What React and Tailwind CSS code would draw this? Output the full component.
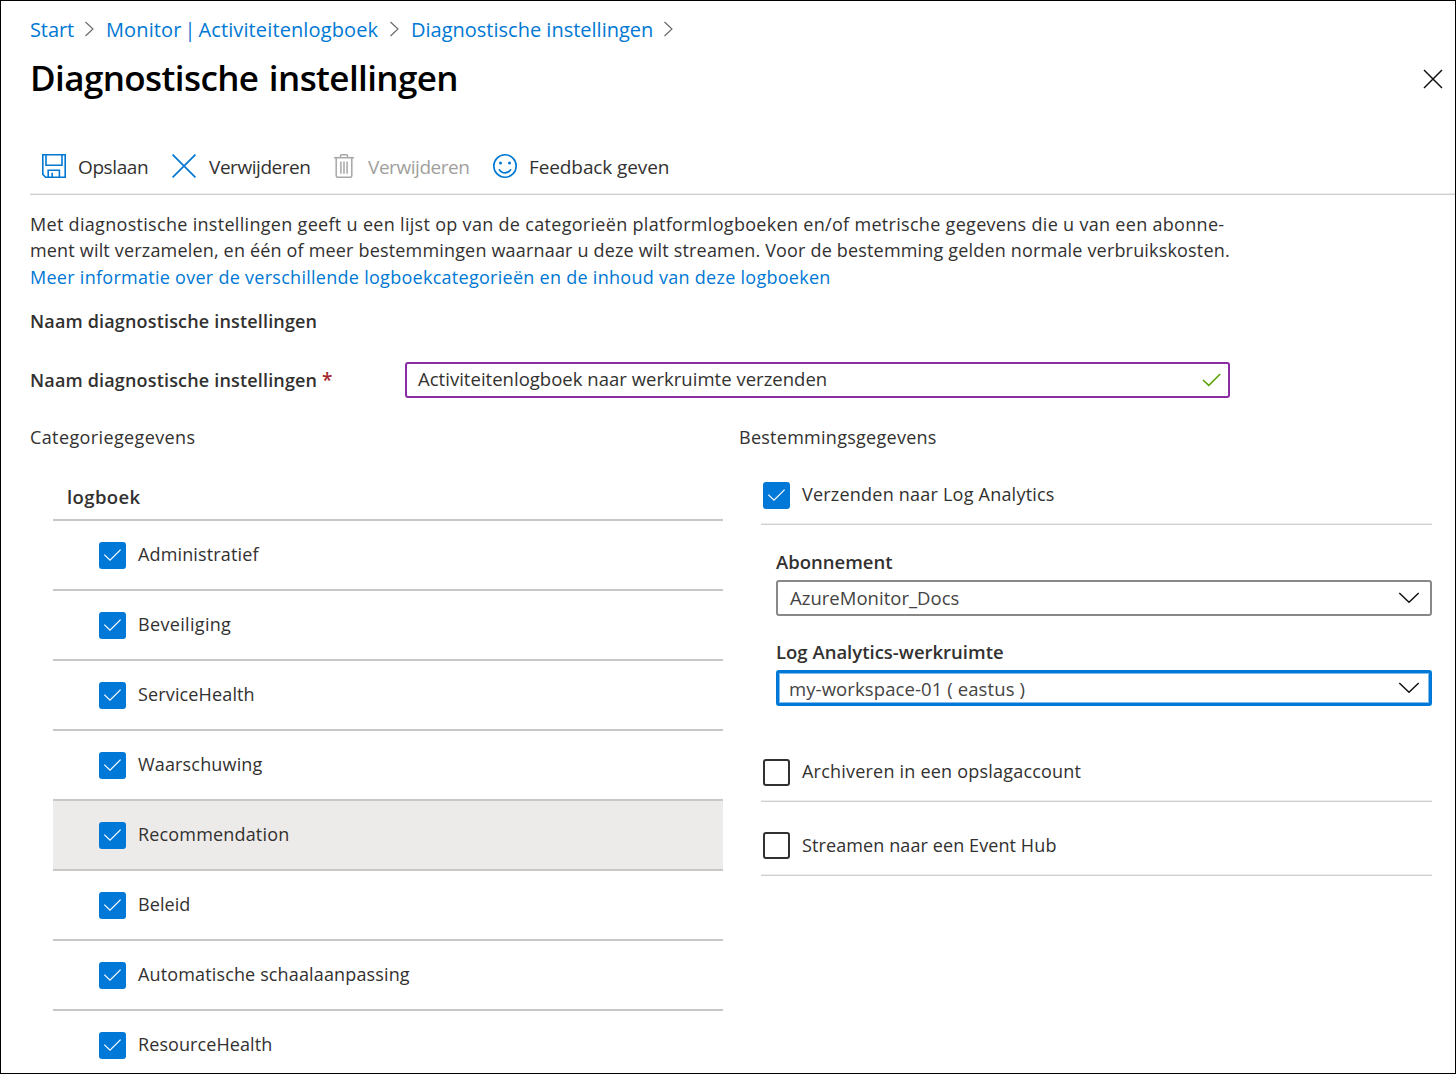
import React from "react";

const lineIcon = { fill: "none", xmlns: "http://www.w3.org/2000/svg" };

function CheckBox({ checked }) {
  if (!checked) return <span className="size-[27px] shrink-0 rounded-[3px] border-2 border-[#323130]" />;
  return (
    <span className="flex size-[27px] shrink-0 items-center justify-center rounded-[3px] bg-[#0078d7]">
      <svg {...lineIcon} width="27" height="27" viewBox="0 0 27 27" stroke="#fff" strokeWidth="1.2">
        <path d="M5.3 12.6 L11 18.2 L21.6 7.6" />
      </svg>
    </span>
  );
}

function CrumbArrow() {
  return (
    <svg {...lineIcon} width="10" height="16" viewBox="0 0 10 16" stroke="#666" strokeWidth="1.1" className="-mt-[3px] shrink-0">
      <path d="M0.5 1 L8 8 L0.5 15" />
    </svg>
  );
}

function SaveIcon() {
  return (
    <svg {...lineIcon} width="24" height="24" viewBox="0 0 24 24" stroke="#0078d4" strokeWidth="1.6">
      <path d="M0.8 0.8 H23.2 V23.2 H3.6 L0.8 20.4 Z" />
      <path d="M4 0.8 V11.2 H20 V0.8" />
      <path d="M6.2 23.2 V16.2 H17.4 V23.2" />
      <path d="M10.2 18.8 V23.2" />
    </svg>
  );
}

function DiscardIcon() {
  return (
    <svg {...lineIcon} width="24" height="24" viewBox="0 0 24 24" stroke="#0078d4" strokeWidth="1.7">
      <path d="M0.6 0.6 L23.4 23.4 M23.4 0.6 L0.6 23.4" />
    </svg>
  );
}

function TrashIcon() {
  return (
    <svg {...lineIcon} width="20" height="24" viewBox="0 0 20 24" stroke="#a9a7a5" strokeWidth="1.5">
      <path d="M0 3.7 H20" />
      <path d="M6.5 3.5 V1.8 Q6.5 0.8 7.5 0.8 H12.5 Q13.5 0.8 13.5 1.8 V3.5" />
      <path d="M2.2 3.7 V21.7 Q2.2 23.2 3.7 23.2 H16.3 Q17.8 23.2 17.8 21.7 V3.7" />
      <path d="M6.9 7.5 V19.8 M10 7.5 V19.8 M13.1 7.5 V19.8" />
    </svg>
  );
}

function SmileIcon() {
  return (
    <svg {...lineIcon} width="24" height="24" viewBox="0 0 24 24" stroke="#0078d4" strokeWidth="1.6">
      <circle cx="12" cy="12" r="11.2" />
      <path d="M6 15.2 Q8.4 18.9 12 18.9 Q15.6 18.9 18 15.2" />
      <circle cx="7.5" cy="9" r="1.5" fill="#0078d4" stroke="none" />
      <circle cx="16.5" cy="9" r="1.5" fill="#0078d4" stroke="none" />
    </svg>
  );
}

function Select({ value, className, focused }) {
  return (
    <div
      className={
        focused
          ? "flex h-9 items-center justify-between rounded-[3px] border-[3px] border-[#0078d7] pr-[9px] pl-[10px] inset-ring inset-ring-[#7fbbeb]"
          : "flex h-9 items-center justify-between rounded-[3px] border-2 border-[#8a8886] pr-[10px] pl-[12px]"
      }
    >
      <span className={"text-[18.5px] whitespace-pre text-[#454443] " + className}>{value}</span>
      <svg {...lineIcon} width="22" height="12" viewBox="0 0 22 12" stroke="#111" strokeWidth="1.5" className="mt-px">
        <path d="M1.3 1 L11 10.3 L20.7 1" />
      </svg>
    </div>
  );
}

function Destination({ label, checked, className, labelClass }) {
  return (
    <div className={"flex items-start border-b border-[#cfcfcf] pl-[2px] shadow-[inset_0_-1px_0_#ededed] " + className}>
      <CheckBox checked={checked} />
      <span className={"ml-3 leading-[27px] whitespace-pre " + labelClass}>{label}</span>
    </div>
  );
}

const categories = [
  { name: "Administratief", tracking: "tracking-[0.14px]" },
  { name: "Beveiliging", tracking: "tracking-[0.33px]" },
  { name: "ServiceHealth", tracking: "tracking-[0.14px]" },
  { name: "Waarschuwing", tracking: "tracking-[0.16px]" },
  { name: "Recommendation", tracking: "tracking-[0.17px]", hovered: true },
  { name: "Beleid", tracking: "tracking-[0.08px]" },
  { name: "Automatische schaalaanpassing", tracking: "tracking-[0.14px]" },
  { name: "ResourceHealth", tracking: "tracking-[0.09px]" },
];

export default function App() {
  return (
    <div className="flex h-[1074px] w-[1456px] flex-col overflow-hidden border border-black bg-white pl-[29px] font-['Open_Sans','Noto_Sans',sans-serif] text-[18px] text-[#323130]">
      <nav className="mt-[9px] flex h-10 shrink-0 items-center text-[20px] whitespace-pre text-[#0078d4]">
        <span className="w-[55px] tracking-[-0.1px]">Start</span>
        <CrumbArrow />
        <span className="ml-[11px] w-[284px] tracking-[0.12px] [word-spacing:-2.4px]">Monitor | Activiteitenlogboek</span>
        <CrumbArrow />
        <span className="ml-[11px] w-[253px]">Diagnostische instellingen</span>
        <CrumbArrow />
      </nav>

      <header className="flex h-[58px] shrink-0 items-center justify-between pr-3">
        <h1 className="-mt-[2px] text-[35px] font-semibold tracking-[-0.6px] text-black [word-spacing:2px]">Diagnostische instellingen</h1>
        <svg {...lineIcon} width="20" height="20" viewBox="0 0 20 20" stroke="#111" strokeWidth="1.5">
          <path d="M1 1 L19 19 M19 1 L1 19" />
        </svg>
      </header>

      <div className="mt-8 flex h-[55px] shrink-0 items-center border-b border-[#cfcfcf] pl-3 text-[19px] whitespace-pre shadow-[inset_0_-1px_0_#ededed] [&_svg]:-mt-[2px]">
        <div className="flex w-[130px] items-center gap-3">
          <SaveIcon />
          <span className="tracking-[-0.4px]">Opslaan</span>
        </div>
        <div className="flex w-[162px] items-center gap-[13px]">
          <DiscardIcon />
          <span className="tracking-[-0.45px]">Verwijderen</span>
        </div>
        <div className="flex w-[159px] items-center gap-[14px] text-[#a19f9d]">
          <TrashIcon />
          <span className="tracking-[-0.45px]">Verwijderen</span>
        </div>
        <div className="flex items-center gap-3">
          <SmileIcon />
          <span className="tracking-[-0.1px]">Feedback geven</span>
        </div>
      </div>

      <div className="mt-4 shrink-0 whitespace-pre">
        <p className="h-[26px] leading-[26px] tracking-[0.306px]">Met diagnostische instellingen geeft u een lijst op van de categorieën platformlogboeken en/of metrische gegevens die u van een abonne-</p>
        <p className="h-[27px] leading-[26px] tracking-[0.176px]">ment wilt verzamelen, en één of meer bestemmingen waarnaar u deze wilt streamen. Voor de bestemming gelden normale verbruikskosten.</p>
        <p className="h-[26.5px] leading-[26px] tracking-[0.276px] text-[#0078d4]">Meer informatie over de verschillende logboekcategorieën en de inhoud van deze logboeken</p>
      </div>

      <h2 className="mt-[17px] h-[27px] shrink-0 leading-[27px] font-semibold tracking-[0.17px]">Naam diagnostische instellingen</h2>

      <div className="mt-[27px] flex h-9 shrink-0 items-center">
        <label className="mt-[2px] w-[375px] font-semibold tracking-[0.17px] whitespace-pre">
          Naam diagnostische instellingen <span className="text-[19px] leading-none text-[#a4262c]">*</span>
        </label>
        <div className="flex h-9 w-[825px] items-center justify-between rounded-[3px] border-2 border-[#8a2da5] pr-[7px] pl-[11px]">
          <span className="-mt-[2px] text-[18.5px] tracking-[0.02px] whitespace-pre">Activiteitenlogboek naar werkruimte verzenden</span>
          <svg {...lineIcon} width="19" height="14" viewBox="0 0 19 14" stroke="#57a300" strokeWidth="1.5">
            <path d="M1 7 L6.8 12.4 L18.2 1" />
          </svg>
        </div>
      </div>

      <div className="mt-[26px] flex min-h-0 flex-1 items-start">
        <section className="w-[693px] shrink-0">
          <h3 className="leading-[27px] tracking-[0.38px]">Categoriegegevens</h3>
          <div className="mt-8 ml-[23px] w-[670px]">
            <div className="flex h-[38px] items-start border-b-2 border-[#c8c8c8] pl-[14px] leading-[27px] font-semibold">
              <span className="text-[18.5px] tracking-[0.4px]">logboek</span>
            </div>
            {categories.map((c) => (
              <div
                key={c.name}
                className={
                  c.hovered
                    ? "flex h-[70px] items-start border-b-2 border-[#c8c8c8] bg-[#edebe9] pt-[21px] pl-[46px]"
                    : "flex h-[70px] items-start border-b-2 border-[#c8c8c8] pt-[21px] pl-[46px]"
                }
              >
                <CheckBox checked />
                <span className={"-mt-px ml-3 leading-[27px] whitespace-pre " + c.tracking}>{c.name}</span>
              </div>
            ))}
          </div>
        </section>

        <section className="ml-4 w-[693px] shrink-0">
          <h3 className="leading-[27px] tracking-[0.27px]">Bestemmingsgegevens</h3>
          <div className="mt-[31px] ml-[22px] w-[671px]">
            <Destination label="Verzenden naar Log Analytics" checked className="h-[43px]" labelClass="-mt-px tracking-[0.22px]" />
            <div className="mt-[23px] ml-[15px]">
              <div className="h-8 text-[18.5px] leading-[27px] font-semibold">Abonnement</div>
              <Select value="AzureMonitor_Docs" className="tracking-[0.02px]" />
              <div className="mt-[22px] h-8 text-[18.5px] leading-[27px] font-semibold">Log Analytics-werkruimte</div>
              <Select value="my-workspace-01 ( eastus )" className="mt-[2px] tracking-[0.1px]" focused />
            </div>
            <Destination label="Archiveren in een opslagaccount" className="mt-[53px] h-[43px]" labelClass="-mt-px tracking-[0.21px]" />
            <Destination label="Streamen naar een Event Hub" className="mt-[30px] h-[44px]" labelClass="tracking-[0.1px]" />
          </div>
        </section>
      </div>
    </div>
  );
}
